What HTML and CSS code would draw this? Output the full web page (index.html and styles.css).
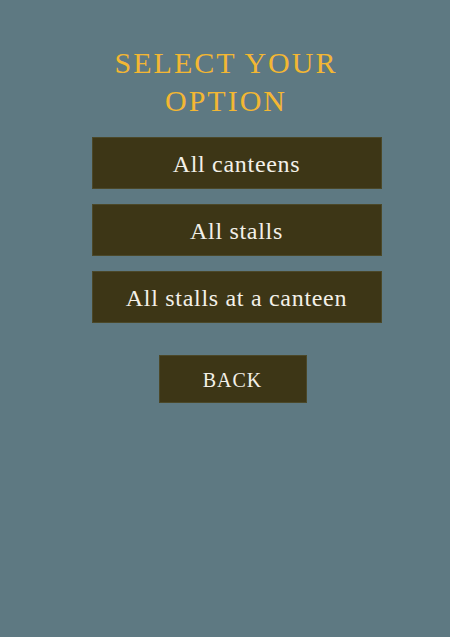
FILE: index.html
```html
<!DOCTYPE html>
<html>
<head>
<meta charset="utf-8">
<link rel="stylesheet" href="styles.css">
</head>
<body>
<main class="page">
  <h1 class="title">SELECT YOUR<br>OPTION</h1>
  <div class="options">
    <button class="opt">All canteens</button>
    <button class="opt">All stalls</button>
    <button class="opt">All stalls at a canteen</button>
  </div>
  <button class="back">BACK</button>
</main>
</body>
</html>
```
FILE: styles.css
```css
html, body {
  margin: 0;
  padding: 0;
  height: 100%;
}
body {
  background: #5e7982;
  font-family: "Liberation Serif", serif;
}
.page {
  display: flex;
  flex-direction: column;
  align-items: center;
  padding-top: 44px;
}
.title {
  margin: 0 0 0 2px;
  color: #f3b733;
  font-weight: normal;
  font-size: 30px;
  line-height: 38px;
  letter-spacing: 2px;
  text-align: center;
}
.options {
  margin: 17px 0 0 23px;
  display: flex;
  flex-direction: column;
  gap: 15px;
}
.opt, .back {
  display: flex;
  align-items: center;
  justify-content: center;
  background: #3d3616;
  border: 1px solid #4b4829;
  color: #f3f0e8;
  font-family: "Liberation Serif", serif;
  padding: 2px 0 0 0;
}
.opt {
  width: 290px;
  height: 52px;
  font-size: 24px;
  letter-spacing: 0.7px;
}
.back {
  margin: 32px 0 0 15px;
  width: 148px;
  height: 48px;
  font-size: 20px;
  letter-spacing: 1px;
}
```
